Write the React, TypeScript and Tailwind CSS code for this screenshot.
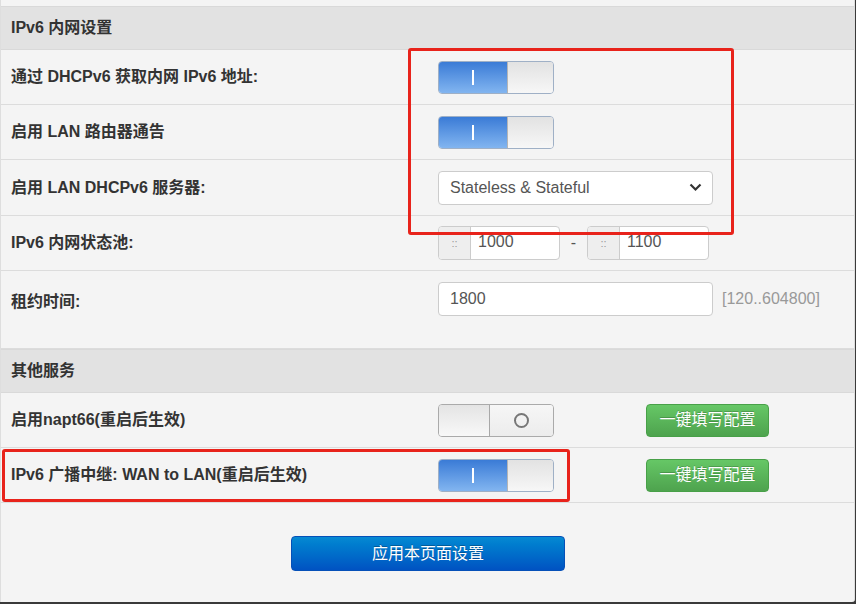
import React from 'react';

const font = "font-['Liberation_Sans','Noto_Sans_CJK_SC',sans-serif]";

const Toggle = ({ on }: { on: boolean }) =>
  on ? (
    <div className="flex w-[116px] h-[33px] rounded-[4px] border border-[#9fb0c6] overflow-hidden">
      <div className="w-[68px] h-full flex items-center justify-center bg-gradient-to-b from-[#3a7bd6] to-[#82b5f0]">
        <span className="block w-[2px] h-[15px] bg-white" />
      </div>
      <div className="flex-1 h-full border-l border-[#b5b5b5] bg-gradient-to-b from-[#e2e2e2] to-[#f7f7f7]" />
    </div>
  ) : (
    <div className="flex w-[116px] h-[33px] rounded-[4px] border border-[#aaaaaa] overflow-hidden">
      <div className="w-[50px] h-full bg-gradient-to-b from-[#e4e4e4] to-[#f8f8f8]" />
      <div className="flex-1 h-full border-l border-[#a8a8a8] flex items-center justify-center bg-gradient-to-b from-[#f6f6f6] to-[#ececec]">
        <span className="block w-[15px] h-[15px] rounded-full border-2 border-[#777]" />
      </div>
    </div>
  );

const GreenButton = () => (
  <button className="w-[123px] h-[33px] rounded-[4px] border border-[#48a048] bg-gradient-to-b from-[#66c766] to-[#4ea34e] text-white text-[16px] leading-none [text-shadow:0_-1px_0_rgba(0,0,0,0.2)]">
    一键填写配置
  </button>
);

const Row = ({ label, h, children, top }: { label: string; h: string; children?: React.ReactNode; top?: boolean }) => (
  <div className={`flex ${top ? 'items-start pt-[11px]' : 'items-center'} border-b border-[#dcdcdc] ${h}`}>
    <div className={`w-[437px] pl-[10px] text-[16px] font-bold text-[#333] ${top ? 'pt-[8px]' : ''}`}>{label}</div>
    <div className="flex items-center">{children}</div>
  </div>
);

const Header = ({ title }: { title: string }) => (
  <div className="h-[44px] flex items-center pl-[10px] bg-[#e2e2e2] border-y border-[#d9d9d9] text-[16px] font-bold text-[#333]">
    {title}
  </div>
);

const AddonInput = ({ value }: { value: string }) => (
  <div className="flex h-[34px] w-[122px] rounded-[4px] border border-[#cccccc] overflow-hidden bg-white">
    <div className="w-[32px] h-full bg-[#eeeeee] border-r border-[#cccccc] flex items-center justify-center text-[11px] text-[#999]">::</div>
    <div className="flex-1 flex items-center pl-[7px] text-[16px] text-[#555] leading-none pb-[2px]">{value}</div>
  </div>
);

export default function App() {
  return (
    <div className={`w-[856px] h-[604px] bg-[#3a3a3a] ${font}`}>
      <div className="relative w-[855px] h-[602px] bg-[#f4f4f4] border-l border-r border-[#dedede] rounded-br-[3px] overflow-hidden">
        <div className="h-[6px]" />
        <Header title="IPv6 内网设置" />
        <Row label="通过 DHCPv6 获取内网 IPv6 地址:" h="h-[55px]">
          <Toggle on />
        </Row>
        <Row label="启用 LAN 路由器通告" h="h-[55px]">
          <Toggle on />
        </Row>
        <Row label="启用 LAN DHCPv6 服务器:" h="h-[56px]">
          <div className="w-[275px] h-[34px] rounded-[4px] border border-[#cccccc] bg-white flex items-center justify-between pl-[11px] pr-[10px]">
            <span className="text-[16px] text-[#555]">Stateless &amp; Stateful</span>
            <svg width="13" height="9" viewBox="0 0 13 9" fill="none">
              <path d="M1.5 1.5 L6.5 6.5 L11.5 1.5" stroke="#333" strokeWidth="2.2" />
            </svg>
          </div>
        </Row>
        <Row label="IPv6 内网状态池:" h="h-[55px]">
          <AddonInput value="1000" />
          <span className="w-[27px] text-center text-[16px] text-[#555]">-</span>
          <AddonInput value="1100" />
        </Row>
        <Row label="租约时间:" h="h-[78px]" top>
          <div className="w-[275px] h-[34px] rounded-[4px] border border-[#cccccc] bg-white flex items-center pl-[11px] text-[16px] text-[#555]">
            1800
          </div>
          <span className="ml-[9px] text-[16px] text-[#999]">[120..604800]</span>
        </Row>
        <Header title="其他服务" />
        <Row label="启用napt66(重启后生效)" h="h-[55px]">
          <Toggle on={false} />
          <div className="ml-[92px]">
            <GreenButton />
          </div>
        </Row>
        <Row label="IPv6 广播中继: WAN to LAN(重启后生效)" h="h-[55px]">
          <Toggle on />
          <div className="ml-[92px]">
            <GreenButton />
          </div>
        </Row>
        <div className="pt-[33px] pl-[290px]">
          <button className="w-[274px] h-[35px] rounded-[4px] border border-[#0550b8] bg-gradient-to-b from-[#0789d2] to-[#0052c2] text-white text-[16px] [text-shadow:0_-1px_0_rgba(0,0,0,0.25)]">
            应用本页面设置
          </button>
        </div>

        {/* annotation boxes */}
        <div className="absolute left-[407px] top-[48px] w-[326px] h-[187px] border-[3px] border-[#e8231b] rounded-[3px]" />
        <div className="absolute left-[1px] top-[449px] w-[568px] h-[53px] border-[3px] border-[#e8231b] rounded-[3px]" />
      </div>
    </div>
  );
}
